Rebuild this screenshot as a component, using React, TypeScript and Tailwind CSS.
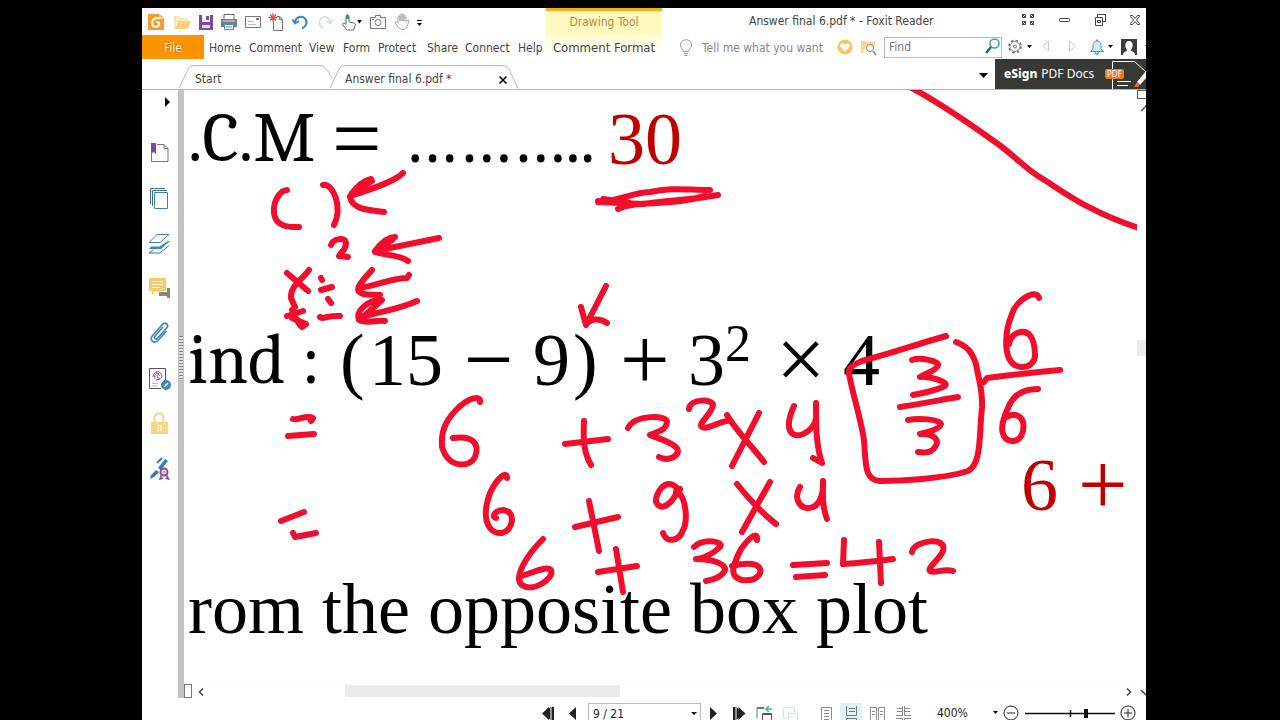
import React from "react";

type IconProps = { children: React.ReactNode; w?: number; h?: number };

function Svg({ children, w = 20, h = 20 }: IconProps) {
  return (
    <svg width={w} height={h} viewBox={`0 0 ${w} ${h}`} fill="none" aria-hidden="true" className="block shrink-0">
      {children}
    </svg>
  );
}

type Tool = { label: string; cell: string; icon: React.ReactNode };

const quickTools: Tool[] = [
  {
    label: "Foxit Reader",
    cell: "w-[27px]",
    icon: (
      <Svg>
        <path d="M2 2h12l4 4v12H2z" fill="#f99b2a" />
        <path d="M14 2v4h4" stroke="#fff" />
        <path d="M13.500 6.500C9 5 5.500 8 6.200 12c.6 3.500 6 3.600 7 .5.500-2-1.500-3-3-2" stroke="#fff" strokeWidth="2" />
      </Svg>
    ),
  },
  {
    label: "Open",
    cell: "w-[25px]",
    icon: (
      <Svg>
        <path d="M3 4h5l2 2h6v4H3z" fill="#fde9b9" />
        <path d="M3 4v12" stroke="#f8cf78" />
        <path d="M6 9h13l-3 8H3z" fill="#fcd27b" />
      </Svg>
    ),
  },
  {
    label: "Save",
    cell: "w-[23px]",
    icon: (
      <Svg>
        <path d="M3 3h14v15H3z" fill="#7f49a6" />
        <path d="M6 3h8v7H6z" fill="#fff" />
        <path d="M10 4h3v4h-3z" fill="#7f49a6" />
        <path d="M6 13h8v3H6z" fill="#e3d6ee" />
      </Svg>
    ),
  },
  {
    label: "Print",
    cell: "w-[24px]",
    icon: (
      <Svg>
        <path d="M5 7V2.500h10V7" stroke="#666" />
        <path d="M2 7h16v8h-3v-3H5v3H2z" fill="#777c80" />
        <path d="M4 9h12" stroke="#dfe5e8" />
        <path d="M5.500 12.500h9v5h-9z" fill="#fff" stroke="#4586ad" />
        <path d="M7 15h6" stroke="#4586ad" />
      </Svg>
    ),
  },
  {
    label: "Email",
    cell: "w-[24px]",
    icon: (
      <Svg>
        <path d="M2.500 4.500h15v11h-15z" stroke="#777" />
        <path d="M13 6h3v2h-3z" fill="#777" />
        <path d="M5 9.500h6M5 12.500h8" stroke="#bbb" />
      </Svg>
    ),
  },
  {
    label: "New from blank",
    cell: "w-[24px]",
    icon: (
      <Svg>
        <path d="M6.500 10v8.500h9v-11l-3-3H10M12.500 4.500v3h3" stroke="#777" />
        <path d="M6 1v9M1.500 5.500h9M3 2.500l6 6M9 2.500l-6 6" stroke="#e2523c" strokeWidth="1.300" />
      </Svg>
    ),
  },
  {
    label: "Undo",
    cell: "w-[24px]",
    icon: (
      <Svg>
        <path d="M4 10c1-5.500 7-6.500 10-3.500 3 3.500 1.500 8-3 10" stroke="#3a87bd" strokeWidth="2" />
        <path d="M1.500 7.500L4 11.500l4-2.500" stroke="#3a87bd" strokeWidth="1.800" />
      </Svg>
    ),
  },
  {
    label: "Redo",
    cell: "w-[24px]",
    icon: (
      <Svg>
        <path d="M15.500 10c-1-5.500-6.500-6-9.500-3.500-3 3.500-1.500 8 2.500 10" stroke="#c3e0ee" strokeWidth="1.600" />
        <path d="M18 7.500l-2.500 4-4-2.500" stroke="#c3e0ee" strokeWidth="1.500" />
      </Svg>
    ),
  },
  {
    label: "Touch mode",
    cell: "w-[29px]",
    icon: (
      <Svg w={24}>
        <path d="M6 12V4.500c0-2 3-2 3 0V10l5 1c1.500.5 1.500 1.500 1 3l-1.500 4H7l-4-5c-1-1.500.8-2.500 1.800-1.500L6 12.500" stroke="#666" />
        <path d="M6 7V4c0-2 3-2 3 0v3z" fill="#4185a8" />
        <path d="M17 8h5l-2.500 3.500z" fill="#000" />
      </Svg>
    ),
  },
  {
    label: "Snapshot",
    cell: "w-[24px]",
    icon: (
      <Svg>
        <path d="M2.500 5.500h5v-2h5v2h5v11h-15z" stroke="#777" />
        <circle cx="10" cy="10.500" r="3" stroke="#777" />
        <path d="M4 7.500h2" stroke="#777" />
      </Svg>
    ),
  },
  {
    label: "Hand",
    cell: "w-[24px]",
    icon: (
      <Svg>
        <path
          d="M6 11V5c0-1.300 2-1.300 2 0v4-6c0-1.300 2-1.300 2 0v6-6c0-1.300 2-1.300 2 0v6-4.500c0-1.300 2-1.300 2 0V10l1.500-2c.8-.8 2 0 1.500 1l-2 5.500c-.8 2-1.800 3-4 3s-4-.8-5-2.500L3.500 11c-.5-1.300 1-2 1.800-1L6 11z"
          stroke="#a5a5a5"
        />
      </Svg>
    ),
  },
  {
    label: "Customize",
    cell: "w-[12px]",
    icon: (
      <Svg w={8}>
        <path d="M1 8.500h5" stroke="#000" />
        <path d="M1 11h5l-2.500 3z" fill="#000" />
      </Svg>
    ),
  },
];

const menus = [
  { name: "Home", cell: "w-[40px]" },
  { name: "Comment", cell: "w-[60px]" },
  { name: "View", cell: "w-[34px]" },
  { name: "Form", cell: "w-[35px]" },
  { name: "Protect", cell: "w-[49px]" },
  { name: "Share", cell: "w-[38px]" },
  { name: "Connect", cell: "w-[53px]" },
  { name: "Help", cell: "w-[28px]" },
];

const panels: { label: string; icon: React.ReactNode }[] = [
  {
    label: "Bookmarks",
    icon: (
      <>
        <path d="M9 3.500h7l4 4v13H3.500V13M16 3.500v4h4" stroke="#777" />
        <path d="M3 2h5v11l-2.500-2L3 13z" fill="#8446a5" />
      </>
    ),
  },
  {
    label: "Pages",
    icon: (
      <>
        <path d="M2.500 18V2.500H17M4.500 20V4.500H19" stroke="#3d708f" />
        <path d="M6.500 6.500h13v16h-13z" stroke="#3a84b3" />
      </>
    ),
  },
  {
    label: "Layers",
    icon: (
      <>
        <path d="M9 3.500h12L12 11.500H1z" stroke="#3e86ad" />
        <path d="M3 15.500h8.500L20 10h2l-9 8H1z" fill="#3a87bd" />
        <path d="M21 14.500l-9 7.500H1l4-3" stroke="#3e6e87" />
      </>
    ),
  },
  {
    label: "Comments",
    icon: (
      <>
        <path d="M11 16h8v-4h3v10h-3v-2h-8z" fill="#858585" />
        <path d="M1 2h17v13H8l-4 4v-4H1z" fill="#fcc966" />
        <path d="M4 5.500h11M4 8.500h11M4 11.500h8" stroke="#fff" />
      </>
    ),
  },
  {
    label: "Attachments",
    icon: (
      <path
        d="M15 6l-8 9c-1.500 2 .7 4 2.500 2.300l9-10c3-3.500-1-6.800-4-3.800l-10 11c-3.500 4.500 1.500 9 5.500 5l8.500-9.500"
        stroke="#3a84c4"
        strokeWidth="1.600"
      />
    ),
  },
  {
    label: "Digital signatures",
    icon: (
      <>
        <path d="M13 22.500H1.500v-20h16V14" stroke="#555" />
        <path d="M5 11c0-7 9-7 9 0-2 3-5 1-5-1 0-2 2.500-2 2.500 0M7 13c-1-5 1-7 4-5M8 14l4-1" stroke="#8446a5" />
        <path d="M4 17.500h6M4 20h6" stroke="#bbb" />
        <circle cx="18" cy="19" r="5" fill="#3a87bd" />
        <path d="M16 21l4-4" stroke="#fff" strokeWidth="1.500" />
      </>
    ),
  },
  {
    label: "Security",
    icon: (
      <>
        <path d="M6.500 12V7c0-6 9-6 9 0v5" stroke="#fbd487" strokeWidth="2" />
        <path d="M3 11h17v12H3z" fill="#fcd482" />
        <path d="M9 14h5v6H9z" fill="#fff" />
        <path d="M11.500 15v5" stroke="#fcd482" strokeWidth="2" />
      </>
    ),
  },
  {
    label: "Sign",
    icon: (
      <>
        <path d="M17 3l3 2-7 9-3-2zM8 14l3 2-5 5-4 2 1-4z" fill="#3180b5" />
        <path d="M9 7l5-5" stroke="#3180b5" strokeWidth="2" />
        <circle cx="16" cy="16" r="3.500" stroke="#8446a5" strokeWidth="2" />
        <circle cx="16" cy="16" r="1.500" fill="#f0913c" />
        <path d="M13.500 19L12 23l3-1M18.500 19l2 4-3-1" stroke="#8446a5" strokeWidth="1.500" />
      </>
    ),
  },
];

const inkStrokes = [
  "M287 190C279 191 273 202 274 213C275 222 281 228 299 227",
  "M323 185C333 183 343 207 334 225",
  "M403 173C396 181 372 189 350 196L371 179C362 181 355 188 350 197C352 208 364 210 384 212",
  "M352 193L367 184M356 191L372 181",
  "M331 245C333 239 345 236 346 243C346 250 341 252 339 256L348 257",
  "M439 238L375 251C381 243 388 237 395 237L382 247L375 252C386 256 398 254 408 261",
  "M381 247L392 240",
  "M287 273L308 291M309 270C302 280 290 286 291 298L295 307",
  "M321 278L322 280M321 290L332 287",
  "M328 299L331 303M320 317C322 320 328 315 340 316",
  "M287 316L303 311M292 310C295 316 298 324 302 327L306 324L292 318",
  "M409 275L407 278C393 278 378 285 360 288M372 270C363 280 353 290 361 293C367 296 373 294 380 295",
  "M417 301C400 309 382 311 363 317L382 300C369 299 355 311 359 320C366 324 376 320 385 321",
  "M606 286L586 325L581 307L586 325C590 318 600 318 607 323",
  "M293 419C298 421 306 414 313 418L311 421M288 436L314 434",
  "M281 521L304 512M293 533L295 537L316 533",
  "M480 402C481 395 469 397 457 409C444 422 441 433 442 447C449 470 471 467 475 457C480 444 473 435 453 438",
  "M565 444L608 439M584 421C583 442 584 453 591 465",
  "M628 428C635 414 668 415 667 422C666 431 658 431 650 435C661 439 678 445 678 451C677 458 666 461 659 457",
  "M689 409C690 398 713 399 713 405C712 414 697 424 702 427C708 430 718 422 727 421",
  "M727 415C736 431 752 446 764 462M759 413L732 466",
  "M794 406C788 419 786 432 795 435C803 437 815 428 816 418M816 403C816 425 816 446 822 463L813 458",
  "M507 478C507 470 497 478 490 493C479 524 492 534 502 533C513 531 517 511 503 510C497 510 490 516 496 518",
  "M575 527L618 517M589 501L599 551",
  "M676 487C665 477 655 494 656 502C662 514 675 500 677 490C688 501 687 523 683 530C679 542 666 543 663 533M676 492L680 489",
  "M737 484C749 499 763 514 776 524M770 482L742 532",
  "M800 487C794 496 798 507 807 508C816 509 824 500 823 481C823 495 822 506 827 519",
  "M543 539C526 556 513 578 522 585C533 593 555 578 551 570C547 565 533 573 521 576",
  "M598 572L637 566M616 549L623 592",
  "M694 547C704 537 725 542 720 547C712 555 701 559 696 559C714 559 729 565 724 572C720 578 712 580 706 581",
  "M757 540C758 530 749 538 741 549C730 570 731 577 742 580C760 582 765 569 756 565C750 563 740 564 732 566",
  "M793 565L827 563M796 577L825 575",
  "M844 540L843 564C858 563 877 561 893 559M879 542L881 583",
  "M912 552C914 540 948 536 943 551C939 560 927 568 930 571C934 574 944 568 953 571",
  "M946 336C918 344 885 355 862 361C851 365 848 370 849 374C853 395 861 420 864 440C866 464 864 480 880 481C900 481 944 479 968 471C982 464 979 433 982 408C983 388 978 378 976 364C972 352 967 346 956 342",
  "M912 360C920 357 939 361 938 365C937 370 925 374 920 377C929 376 950 382 945 386C935 391 924 393 913 395",
  "M900 407C920 404 940 400 958 397",
  "M908 420C918 418 940 419 941 424C940 429 928 432 920 434C933 433 941 440 935 447C932 453 925 453 918 452",
  "M1039 298C1036 287 1015 302 1012 314C1004 333 1003 361 1017 366C1029 370 1036 361 1035 353C1034 336 1028 331 1021 332C1014 333 1010 338 1009 344",
  "M984 382L987 378C1010 375 1037 372 1060 370",
  "M1038 389C1018 389 1011 400 1008 408C998 429 1002 440 1012 441C1020 442 1025 432 1023 422C1020 414 1012 413 1007 417",
  "M908 86C935 100 966 121 998 144C1012 154 1024 167 1038 176C1060 189 1087 212 1142 229",
  "M598 201C616 203 628 193 650 192C671 187 687 190 710 190M598 202L643 204C667 200 692 200 718 195M618 209C636 200 667 207 705 196M603 199L630 203",
];

const iconButton = "flex items-center justify-center";
const operator = "font-['Liberation_Serif',serif] text-[88px]";
const digit = "font-['Liberation_Serif',serif] text-[74px]";

export default function App() {
  return (
    <div className="flex h-screen min-h-[400px] overflow-hidden bg-black pt-2 pr-[134px] pl-[142px] font-['DejaVu_Sans_Condensed','DejaVu_Sans',sans-serif] text-xs text-[#444]">
      <div className="flex min-w-0 flex-1 flex-col overflow-hidden bg-white">
        <header className="flex h-[27px] shrink-0">
          <div className="flex w-[404px] shrink-0" role="toolbar" aria-label="Quick access">
            {quickTools.map((t) => (
              <button key={t.label} aria-label={t.label} className={`${t.cell} ${iconButton} shrink-0`}>
                {t.icon}
              </button>
            ))}
          </div>
          <div className="flex w-[116px] shrink-0 items-center justify-center border-t-3 border-[#f3b01c] bg-[#fffabf] pb-[3px] text-[#cb8040]">
            Drawing Tool
          </div>
          <h1 className="min-w-0 flex-1 truncate pl-[87px] leading-[27px]">Answer final 6.pdf * - Foxit Reader</h1>
          <div className="-mr-2 flex shrink-0">
            <button aria-label="Ribbon options" className={`w-9 ${iconButton}`}>
              <Svg>
                <g stroke="#444">
                  <path d="M4.500 2.500h3v3h-3zM12.500 2.500h3v3h-3zM4.500 9.500h3v3h-3zM12.500 9.500h3v3h-3z" />
                  <path d="M4 2l4 4M16 2l-4 4M4 13l4-4M16 13l-4-4" />
                </g>
              </Svg>
            </button>
            <button aria-label="Minimize" className={`w-9 ${iconButton}`}>
              <Svg>
                <rect x="5.500" y="6.500" width="10" height="3" rx="1" stroke="#444" />
              </Svg>
            </button>
            <button aria-label="Restore" className={`w-9 ${iconButton}`}>
              <Svg>
                <path d="M7.500 5V2.500h8v7H13M5.500 5.500h7v8h-7zM7.500 8.500h3v2h-3z" stroke="#444" />
              </Svg>
            </button>
            <button aria-label="Close" className={`w-9 ${iconButton}`}>
              <Svg>
                <path d="M4.500 3.500h2l2.500 3 2.500-3h2v1L10.500 8l3 3.500v1h-2L9 9.500l-2.500 3h-2v-1l3-3.500-3-3.500z" stroke="#444" />
              </Svg>
            </button>
          </div>
        </header>

        <nav className="flex h-6 shrink-0 items-center" aria-label="Ribbon">
          <div className="flex w-[404px] shrink-0 items-center">
            <button className="mr-[5px] h-6 w-[62px] bg-[#fe9400] pt-px text-white [text-shadow:0_0_2px_#8a5200]">File</button>
            {menus.map((m) => (
              <button key={m.name} className={`${m.cell} shrink-0 pt-px text-left whitespace-nowrap`}>
                {m.name}
              </button>
            ))}
          </div>
          <button className="h-6 w-[116px] shrink-0 bg-linear-to-b from-[#fffcd6] to-white pt-px text-[13px] whitespace-nowrap">
            Comment Format
          </button>
          <label className="flex min-w-0 flex-1 items-center gap-1 pl-[14px]">
            <Svg w={20}>
              <path d="M7.500 13.500c0-2-3-3-3-6.500 0-7 11-7 11 0 0 3.500-3 4.500-3 6.500zM8 15.500h4M8.500 17.500h3" transform="translate(0 1)" stroke="#999" />
            </Svg>
            <input
              aria-label="Tell me what you want"
              placeholder="Tell me what you want"
              className="min-w-0 flex-1 pt-px pl-[2px] outline-none placeholder:text-[#888]"
            />
          </label>
          <button aria-label="Favorites" className={`w-[24px] shrink-0 ${iconButton}`}>
            <Svg>
              <circle cx="10" cy="10" r="7.500" fill="#f8c45f" />
              <path d="M10 14.500L5.500 10C4 7 8 5 10 8c2-3 6-1 4.500 2z" fill="#fff" />
            </Svg>
          </button>
          <button aria-label="Search files" className={`mr-[5px] w-[22px] shrink-0 ${iconButton}`}>
            <Svg>
              <path d="M3 4h5l1 1h8v4H8L5 16H3z" fill="#fcd78b" />
              <circle cx="12" cy="11" r="3.500" fill="#fff" stroke="#888" />
              <path d="M15 14l3 4" stroke="#888" strokeWidth="1.500" />
            </Svg>
          </button>
          <label className="flex h-[21px] w-[118px] shrink-0 items-center border border-[#bbb]">
            <input aria-label="Find" placeholder="Find" className="w-0 flex-1 pl-1 outline-none placeholder:text-[#777]" />
            <Svg w={18}>
              <circle cx="11.500" cy="6.500" r="4.500" stroke="#3f94c4" strokeWidth="1.500" />
              <path d="M8 10l-5 6" stroke="#2e5f8c" strokeWidth="2.500" />
            </Svg>
          </label>
          <div className="-mr-2 flex shrink-0 items-center pl-1">
            <button aria-label="Settings" className={`w-7 ${iconButton}`}>
              <Svg w={26}>
                <circle cx="8" cy="9.500" r="6" stroke="#777" strokeWidth="1.800" strokeDasharray="2.500 2.200" />
                <circle cx="8" cy="9.500" r="5" fill="#fff" stroke="#888" />
                <circle cx="8" cy="9.500" r="1.500" stroke="#777" />
                <path d="M20 8h5l-2.500 3z" fill="#000" />
              </Svg>
            </button>
            <button aria-label="Previous" className={`w-[26px] ${iconButton}`}>
              <Svg>
                <path d="M11.500 4v10L6 9z" stroke="#ccc" />
              </Svg>
            </button>
            <button aria-label="Next" className={`w-[26px] ${iconButton}`}>
              <Svg>
                <path d="M6.500 4v10l6-5z" stroke="#ccc" />
              </Svg>
            </button>
            <button aria-label="Notifications" className={`w-[30px] ${iconButton}`}>
              <Svg w={26}>
                <path d="M2.500 14.500h13L13 12V8.500c0-6-8-6-8 0V12z" fill="#d3edf8" stroke="#3f94c4" />
                <path d="M7 15.500c.5 2 3.500 2 4 0M9 4V2.500" stroke="#3f94c4" strokeWidth="1.500" />
                <path d="M20 8h5l-2.500 3z" fill="#000" />
              </Svg>
            </button>
            <button aria-label="Account" className={`w-[38px] ${iconButton}`}>
              <Svg w={36}>
                <path d="M4 2h16v16H4z" fill="#3e3e3e" />
                <path d="M6 18c0-4 4-3 4-5-2-2-3-9 2-9s4 7 2 9c0 2 4 1 4 5z" fill="#fff" />
                <path d="M28 8h5l-2.500 3z" fill="#000" />
              </Svg>
            </button>
          </div>
        </nav>

        <div className="flex h-[31px] shrink-0 items-end border-b border-[#b5b5b5] pl-[37px]" role="tablist">
          <button role="tab" aria-selected="false" className="relative h-6 w-[151px] shrink-0 pt-1 pl-4 text-left">
            <svg width="156" height="24" viewBox="0 0 156 24" fill="none" className="absolute top-0 left-0" aria-hidden="true">
              <path d="M0 23.500L9 4q2-3.500 5-3.500h127q4 0 7 4l5 8" stroke="#b8b8b8" />
            </svg>
            Start
          </button>
          <div className="relative flex h-6 w-[190px] shrink-0 items-center pt-1">
            <svg width="190" height="24" viewBox="0 0 190 24" fill="none" className="absolute top-0 left-0" aria-hidden="true">
              <path d="M0 23.500L9 4q2-3.500 5-3.500h159q4 0 6 4l9 19" stroke="#b8b8b8" />
            </svg>
            <button role="tab" aria-selected="true" className="flex-1 pl-[15px] text-left">
              Answer final 6.pdf *
            </button>
            <button aria-label="Close tab" className="relative mr-[2px] flex size-5 items-center">
              <Svg w={10} h={10}>
                <path d="M1.500 2.500l7 7M8.500 2.500l-7 7" stroke="#000" strokeWidth="1.600" />
              </Svg>
            </button>
          </div>
          <div className="flex-1" />
          <button aria-label="Tab list" className="mb-1 flex w-4 shrink-0">
            <Svg w={10}>
              <path d="M0 8h9l-4.500 5z" fill="#000" />
            </Svg>
          </button>
          <a
            href="#esign"
            className="flex h-[30px] w-[151px] shrink-0 items-center bg-[#383834] pl-[9px] font-['Noto_Sans','Open_Sans',sans-serif] whitespace-nowrap text-white"
          >
            <b className="mr-1 font-extrabold">eSign</b>
            PDF Docs
            <span className="relative ml-auto flex h-[30px] w-[41px] items-center">
              <svg width="34" height="30" viewBox="0 0 34 30" fill="none" className="absolute top-0 right-0" aria-hidden="true">
                <path d="M.5 30V2.500h22L34 13M5 22.500h14M5 26.500h11" stroke="#fff" />
                <path d="M34 12l-9 11 3 3 6-7" fill="#fff" />
                <path d="M25 23l3 2c-1 4-4 3-6 3z" fill="#ec6f25" />
              </svg>
              <span className="relative rounded-xs bg-[#ee7b22] px-[2px] text-[8px] leading-[10px]">PDF</span>
            </span>
          </a>
        </div>

        <div className="flex min-h-0 flex-1">
          <aside className="flex w-9 shrink-0 flex-col items-center" aria-label="Navigation panels">
            <button aria-label="Expand panel" className="mb-[25px] ml-[14px] pt-[6px]">
              <Svg w={8} h={14}>
                <path d="M2 1v10l5-5z" fill="#000" />
              </Svg>
            </button>
            <div className="flex flex-col gap-[21px] pt-[6px]">
              {panels.map((p) => (
                <button key={p.label} aria-label={p.label}>
                  <Svg w={24} h={24}>
                    {p.icon}
                  </Svg>
                </button>
              ))}
            </div>
          </aside>
          <div className="flex w-[6px] shrink-0 justify-center bg-[#c3c3c3] pt-[246px]">
            <div className="h-11 w-1 bg-[repeating-linear-gradient(to_bottom,#888_0,#888_1px,#ddd_1px,#ddd_3px)]" />
          </div>

          <div className="flex min-w-0 flex-1 flex-col">
            <div className="flex min-h-0 flex-1">
              <main className="relative min-w-0 flex-1 overflow-hidden bg-[#fcfffe] pt-[13px] pl-1 font-[Cambria,Caladea,'Liberation_Serif',serif] text-[72px] leading-[72px] whitespace-nowrap text-black">
                <p className="mb-[149px] grid h-[72px] grid-cols-[144px_71px_205px_1fr] items-start">
                  <span className="text-[70px]">.C.M</span>
                  <span className={operator}>=</span>
                  <span>………..</span>
                  <span className={`text-[#c00000] ${digit}`}>30</span>
                </p>
                <p className="mb-[53px] grid h-[72px] grid-cols-[152px_29px_95px_69px_40px_47px_68px_88px_67px_1fr] items-start">
                  <span>ind :</span>
                  <span className={digit}>(</span>
                  <span className={digit}>15</span>
                  <span className={operator}>−</span>
                  <span className={digit}>9</span>
                  <span className={digit}>)</span>
                  <span className={operator}>+</span>
                  <span className={digit}>
                    3<sup className="-top-6 text-[52px] leading-[0px]">2</sup>
                  </span>
                  <span className={operator}>×</span>
                  <span className={digit}>4</span>
                </p>
                <p className="mb-[52px] grid h-[72px] grid-cols-[57px_1fr] items-start pl-[833px] text-[#c00000]">
                  <span className={digit}>6</span>
                  <span className={operator}>+</span>
                </p>
                <p className="font-['Liberation_Serif',serif]">rom the opposite box plot</p>
                <svg
                  width="954"
                  height="594"
                  viewBox="184 90 954 594"
                  fill="none"
                  stroke="#f30d2c"
                  strokeWidth="6"
                  strokeLinecap="round"
                  strokeLinejoin="round"
                  className="absolute top-0 left-0"
                  aria-label="Ink annotations"
                >
                  {inkStrokes.map((d, i) => (
                    <path key={i} d={d} />
                  ))}
                </svg>
              </main>
              <div className="flex w-[9px] shrink-0 flex-col overflow-hidden bg-white">
                <div className="h-[9px] w-4 shrink-0 border border-[#555]" />
                <Svg w={16} h={16}>
                  <path d="M4 12l5-5 5 5" stroke="#555" strokeWidth="1.500" />
                </Svg>
                <div className="mt-[225px] h-4 w-4 shrink-0 bg-[#ececec]" />
              </div>
            </div>
            <div className="flex h-[14px] shrink-0 items-center bg-white">
              <div className="h-[14px] w-2 border border-[#777]" />
              <Svg w={18} h={14}>
                <path d="M11 4.500L7.500 8l3.500 3.500" stroke="#444" strokeWidth="1.500" />
              </Svg>
              <div className="flex-1 pl-[135px]">
                <div className="h-3 w-[275px] bg-[#ececec]" />
              </div>
              <Svg w={16} h={14}>
                <path d="M7 4.500l3.500 3.500L7 11.500" stroke="#444" strokeWidth="1.500" />
              </Svg>
              <Svg w={10} h={14}>
                <path d="M5 6l5 5" stroke="#444" strokeWidth="1.500" />
              </Svg>
            </div>
          </div>
        </div>

        <footer className="flex h-[22px] shrink-0 items-start overflow-hidden pt-[5px] pl-[396px] text-[#222]">
          <button aria-label="First page" className="w-[26px]">
            <Svg>
              <path d="M11 4v13l-7-6.500zM16 4v13h-2.500V4zM12.500 4v13l-2-2V6z" fill="#222" />
            </Svg>
          </button>
          <button aria-label="Previous page" className="w-[24px]">
            <Svg>
              <path d="M12 4v13l-7-6.500z" fill="#222" />
            </Svg>
          </button>
          <label className="flex h-[22px] w-[113px] items-center border border-[#bbb]">
            <input aria-label="Page" defaultValue="9 / 21" className="h-5 w-0 flex-1 pl-1 outline-none" />
            <Svg w={10}>
              <path d="M1 8h6l-3 3z" fill="#000" />
            </Svg>
          </label>
          <button aria-label="Next page" className="ml-1 w-[24px]">
            <Svg>
              <path d="M5 4v13l7-6.500z" fill="#222" />
            </Svg>
          </button>
          <button aria-label="Last page" className="w-[26px]">
            <Svg>
              <path d="M4 4h2.500v13H4zM7.500 4l2 2V4l7 6.500-7 6.500v-2l-2 2z" fill="#222" />
            </Svg>
          </button>
          <button aria-label="Previous view" className="w-[26px]">
            <Svg>
              <path d="M2 15V4.500h7M2 5.500h7" stroke="#4b7ea3" />
              <path d="M17 6h-6m3-3l-3 3 3 3" stroke="#53b493" strokeWidth="1.500" />
              <path d="M7.500 17v-6.500h9V17M7 11.500h10" stroke="#555" />
            </Svg>
          </button>
          <button aria-label="Next view" className="w-[37px]">
            <Svg>
              <path d="M2.500 15V4.500h11V9M7.500 17v-6.500h9V17M2 15h6" stroke="#cfe6e4" />
            </Svg>
          </button>
          <button aria-label="Single page" className="w-[22px]">
            <Svg>
              <path d="M3.500 20V4.500h10V20M6 7.500h5M6 10.500h5M6 13.500h5M6 16.500h5" stroke="#8a8a8a" />
            </Svg>
          </button>
          <button aria-label="Continuous" className="w-[22px] bg-[#ddf3fa]">
            <Svg w={22}>
              <path d="M6.500 3v9.500h10V3M9 5.500h6M9 8.500h6M6.500 20v-4.500h10V20" stroke="#777" />
            </Svg>
          </button>
          <button aria-label="Facing" className="ml-1 w-[26px]">
            <Svg>
              <path d="M4.500 20V4.500h6V20M12.500 20V4.500h6V20M6 8.500h3M6 11.500h3M14 8.500h3M14 11.500h3" stroke="#8a8a8a" />
            </Svg>
          </button>
          <button aria-label="Continuous facing" className="w-[45px]">
            <Svg>
              <path d="M10.500 3v9.500H4M12.500 3v9.500H19M10.500 20v-4.500H4M12.500 20v-4.500H19M5 5.500h5M5 8.500h5M13 5.500h5M13 8.500h5" stroke="#8a8a8a" />
            </Svg>
          </button>
          <output className="w-[48px] leading-5">400%</output>
          <div className="flex-1" />
          <button aria-label="Zoom levels" className="shrink-0">
            <Svg w={12}>
              <path d="M4 8h5l-2.500 3z" fill="#000" />
            </Svg>
          </button>
          <button aria-label="Zoom out" className="shrink-0">
            <Svg>
              <circle cx="10" cy="10" r="7" stroke="#222" />
              <path d="M6 10h8" stroke="#222" />
            </Svg>
          </button>
          <label className="relative flex h-5 w-[99px] shrink-0 items-center">
            <input type="range" aria-label="Zoom" defaultValue={68} className="absolute inset-0 w-full opacity-0" />
            <Svg w={99}>
              <path d="M4 10.500h90M49.500 7v7" stroke="#111" strokeWidth="1.500" />
              <path d="M63 6h4v9h-4z" fill="#111" />
            </Svg>
          </label>
          <button aria-label="Zoom in" className="mr-[6px] shrink-0">
            <Svg>
              <circle cx="8" cy="10" r="7" stroke="#222" />
              <path d="M4 10h8M8 6v8" stroke="#222" />
            </Svg>
          </button>
        </footer>
      </div>
    </div>
  );
}
